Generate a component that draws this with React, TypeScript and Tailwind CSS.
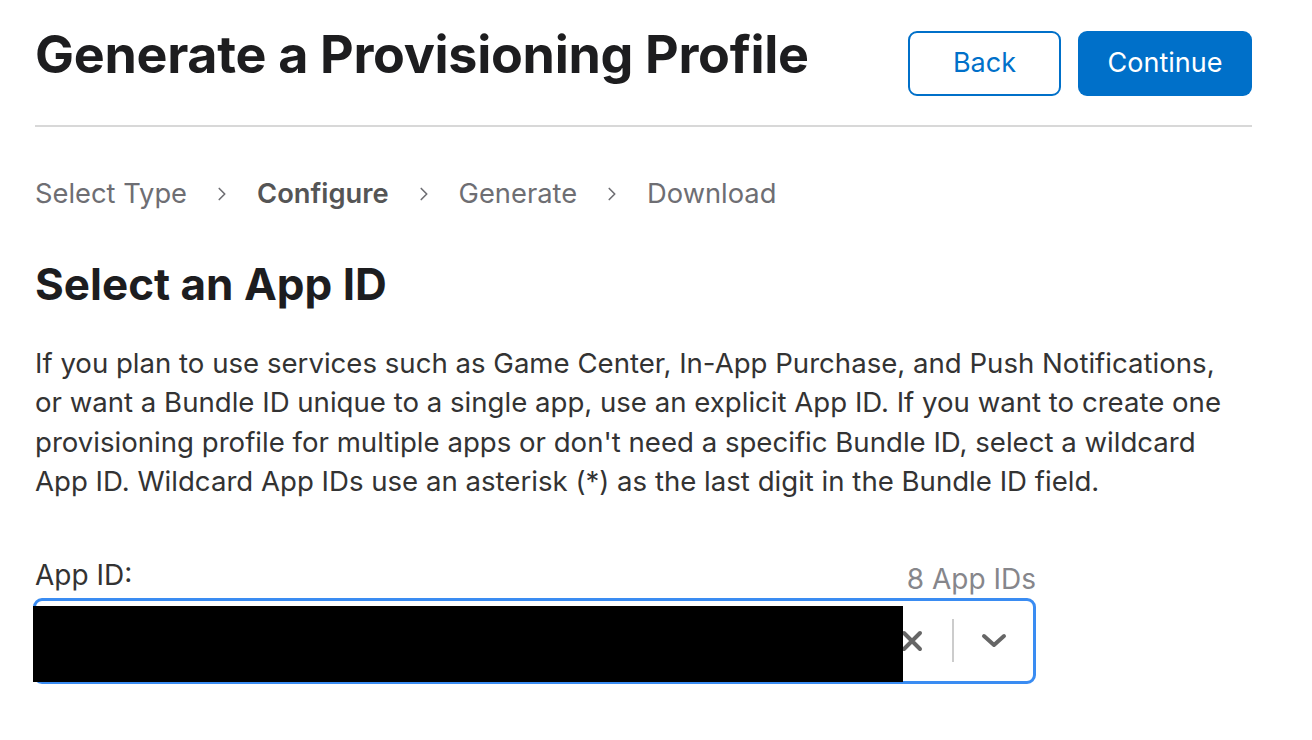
import { ChevronRight } from 'lucide-react';

const steps = [
  { label: 'Select Type', active: false },
  { label: 'Configure', active: true },
  { label: 'Generate', active: false },
  { label: 'Download', active: false },
];

export default function App() {
  return (
    <div className="min-h-screen bg-white text-[#1d1d1f]" style={{ fontFamily: 'Inter, "Liberation Sans", sans-serif' }}>
      <div className="w-[1217px] ml-[35px]">
        {/* Header */}
        <div className="flex items-start justify-between pt-[31px] pb-[29px] border-b-2 border-[#d8d8d8]">
          <h1 className="text-[52px] leading-[52px] font-bold tracking-[-0.3px] -mt-[2px]">Generate a Provisioning Profile</h1>
          <div className="flex gap-[17px]">
            <button className="w-[153px] h-[65px] rounded-[9px] border-2 border-[#0070c9] text-[#0070c9] text-[27px]">Back</button>
            <button className="w-[174px] h-[65px] rounded-[9px] bg-[#0070c9] text-white text-[27px]">Continue</button>
          </div>
        </div>

        {/* Steps */}
        <div className="flex items-center mt-[47px] text-[27.3px] text-[#6e6e73]">
          {steps.map((s, i) => (
            <div key={s.label} className="flex items-center">
              <span className={s.active ? 'font-semibold text-[#555]' : ''}>{s.label}</span>
              {i < steps.length - 1 && <ChevronRight size={22} strokeWidth={1.8} className="mx-[24px] text-[#6e6e73]" />}
            </div>
          ))}
        </div>

        <h2 className="text-[44px] font-bold mt-[43px] leading-[52px]">Select an App ID</h2>

        <p className="mt-[34px] text-[27.6px] leading-[39.5px] text-[#333]">
          If you plan to use services such as Game Center, In-App Purchase, and Push Notifications,<br />
          or want a Bundle ID unique to a single app, use an explicit App ID. If you want to create one<br />
          provisioning profile for multiple apps or don't need a specific Bundle ID, select a wildcard<br />
          App ID. Wildcard App IDs use an asterisk (*) as the last digit in the Bundle ID field.
        </p>

        <div className="w-[1001px] mt-[55px]">
          <div className="flex items-end justify-between">
            <span className="text-[28px] leading-[36px] text-[#333]">App ID:</span>
            <span className="text-[28px] leading-[36px] text-[#86868b] translate-y-[4px]">8 App IDs</span>
          </div>
          <div className="relative mt-[5px] -ml-[2px] h-[86px] rounded-[9px] border-[3px] border-[#3a8cf2] flex items-center">
            <div className="absolute left-[-3px] top-[5px] w-[870px] h-[76px] bg-black" />
            <div className="ml-auto flex items-center pr-[26px]">
              <svg width="22" height="22" viewBox="0 0 22 22" className="mr-[29px]">
                <path d="M3 3 L19 19 M19 3 L3 19" stroke="#666" strokeWidth="4" strokeLinecap="round" />
              </svg>
              <div className="w-[2px] h-[43px] bg-[#ccc]" />
              <svg width="26" height="16" viewBox="0 0 26 16" className="ml-[27px]">
                <path d="M3 3 L13 12 L23 3" fill="none" stroke="#666" strokeWidth="4" strokeLinecap="round" strokeLinejoin="round" />
              </svg>
            </div>
          </div>
        </div>
      </div>
    </div>
  );
}
